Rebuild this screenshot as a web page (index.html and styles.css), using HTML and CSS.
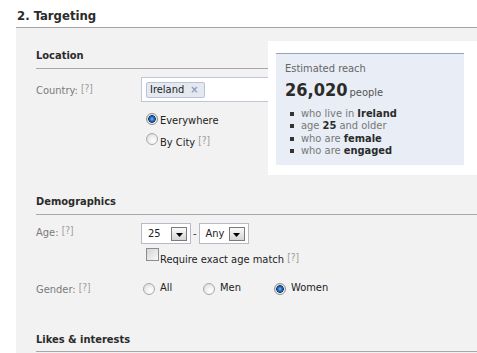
FILE: index.html
```html
<!DOCTYPE html>
<html>
<head>
<meta charset="utf-8">
<title>Targeting</title>
<link rel="stylesheet" href="styles.css">
</head>
<body>
<div class="page">
  <h2 class="title">2. Targeting</h2>
  <div class="panel">
    <section class="sec sec-loc">
      <h3 class="sec-head">Location</h3>
      <div class="row row-country">
        <div class="label label-country">Country: <span class="help">[?]</span></div>
        <div class="field">
          <div class="tokenbox">
            <span class="token"><span class="token-text">Ireland</span><span class="token-x">×</span></span>
          </div>
          <div class="opts">
            <div class="opt"><span class="radio on"></span><span class="txt">Everywhere</span></div>
            <div class="opt"><span class="radio"></span><span class="txt">By City <span class="help">[?]</span></span></div>
          </div>
        </div>
      </div>
    </section>

    <section class="sec sec-demo">
      <h3 class="sec-head">Demographics</h3>
      <div class="row row-age">
        <div class="label label-age">Age: <span class="help">[?]</span></div>
        <div class="field">
          <div class="age-ctrl">
            <div class="select"><span class="sel-text">25</span><span class="arrow"><svg width="7" height="4" viewBox="0 0 7 4"><path d="M0 0H7L3.5 4Z" fill="#000"/></svg></span></div>
            <span class="dash">-</span>
            <div class="select"><span class="sel-text">Any</span><span class="arrow"><svg width="7" height="4" viewBox="0 0 7 4"><path d="M0 0H7L3.5 4Z" fill="#000"/></svg></span></div>
          </div>
          <div class="check-row"><span class="checkbox"></span><span class="txt">Require exact age match <span class="help">[?]</span></span></div>
        </div>
      </div>
      <div class="row row-gender">
        <div class="label">Gender: <span class="help">[?]</span></div>
        <div class="gender-opts">
          <div class="g-opt"><span class="radio"></span><span class="txt">All</span></div>
          <div class="g-opt"><span class="radio"></span><span class="txt">Men</span></div>
          <div class="g-opt"><span class="radio on"></span><span class="txt">Women</span></div>
        </div>
      </div>
    </section>

    <section class="sec sec-likes">
      <h3 class="sec-head">Likes &amp; interests</h3>
    </section>

    <aside class="reach-wrap">
      <div class="reach">
        <div class="reach-title">Estimated reach</div>
        <div class="reach-num"><span class="big">26,020</span><span class="people">people</span></div>
        <ul class="reach-list">
          <li>who live in <b>Ireland</b></li>
          <li>age <b>25</b> and older</li>
          <li>who are <b>female</b></li>
          <li>who are <b>engaged</b></li>
        </ul>
      </div>
    </aside>
  </div>
</div>
</body>
</html>
```

FILE: styles.css
```css
html, body {
  margin: 0;
  padding: 0;
  background: #fff;
  overflow: hidden;
}
body {
  font-family: "DejaVu Sans Condensed", "DejaVu Sans", sans-serif;
  font-stretch: condensed;
  font-size: 11px;
  line-height: 14px;
  color: #333;
}
.page {
  padding-left: 16px;
}
.title {
  margin: 0 0 3px 1px;
  padding-top: 8px;
  font-size: 13px;
  line-height: 16px;
  font-weight: bold;
  color: #2b2b2b;
}
.panel {
  position: relative;
  background: #f2f2f2;
  border-top: 1px solid #a3a3a3;
  padding: 21px 0 3px 20px;
}
.sec + .sec {
  margin-top: 36px;
}
.sec-head {
  margin: 0;
  font-size: 11px;
  line-height: 14px;
  font-weight: bold;
  padding-bottom: 5px;
  border-bottom: 1px solid #a8a8a8;
  color: #2b2b2b;
}
.sec-likes .sec-head {
  padding-bottom: 4px;
}
.row {
  display: grid;
  grid-template-columns: 105px 1fr;
}
.label {
  color: #7a7a7a;
}
.help {
  font-size: 10px;
  color: #9a9a9a;
  vertical-align: 2px;
}
.row-country {
  margin-top: 8px;
}
.label-country {
  padding-top: 5px;
}
.tokenbox {
  width: 240px;
  height: 25px;
  box-sizing: border-box;
  border: 1px solid #bdc7d8;
  background: #fff;
  padding: 4px;
}
.token {
  display: inline-flex;
  align-items: center;
  gap: 6px;
  height: 16px;
  box-sizing: border-box;
  border: 1px solid #b9c3d8;
  border-radius: 2px;
  background: #e4e8f1;
  padding: 0 5px 0 3px;
  color: #222;
}
.token-x {
  color: #8e9bb2;
  font-weight: bold;
  font-size: 11px;
}
.opts {
  margin-top: 9px;
  margin-bottom: 8px;
}
.opt {
  display: flex;
  align-items: flex-start;
  height: 20px;
  line-height: 20px;
  color: #222;
}
.opt .radio {
  margin: 2px 2px 0 5px;
}
.radio {
  flex-shrink: 0;
  width: 12px;
  height: 12px;
  box-sizing: border-box;
  border-radius: 50%;
  border: 1px solid #a9a9a9;
  background: radial-gradient(circle at 65% 70%, #ffffff 0, #f3f3f3 35%, #d6d6d6 100%);
}
.radio.on {
  border-color: #8d8d8d;
  background:
    radial-gradient(circle at 50% 50%, #7fc0f0 0, #2f7fd0 1.6px, #1b5aa5 2.8px, #0f2f5c 3.5px, rgba(15,47,92,0) 4.1px),
    radial-gradient(circle at 65% 70%, #ffffff 0, #f3f3f3 35%, #d6d6d6 100%);
}
.row-age {
  margin-top: 8px;
}
.label-age {
  padding-top: 1px;
}
.age-ctrl {
  display: flex;
  align-items: center;
}
.select {
  width: 50px;
  height: 21px;
  box-sizing: border-box;
  border: 1px solid #b5bcc7;
  background: #fff;
  display: flex;
  align-items: center;
  justify-content: space-between;
  padding: 0 3px 0 6px;
  color: #222;
}
.arrow {
  width: 16px;
  height: 14px;
  box-sizing: border-box;
  border: 1px solid #7a7a7a;
  background: linear-gradient(#fafafa, #d4d4d4);
  display: flex;
  align-items: center;
  justify-content: center;
  padding-top: 2px;
}
.arrow svg {
  display: block;
}
.dash {
  margin: 0 2px;
}
.check-row {
  display: flex;
  align-items: flex-start;
  margin-top: 4px;
  margin-left: 5px;
  color: #222;
}
.checkbox {
  flex-shrink: 0;
  width: 13px;
  height: 13px;
  box-sizing: border-box;
  border: 1px solid #8c8c8c;
  background: linear-gradient(135deg, #d4d4d4, #f8f8f8);
  margin-right: 1px;
}
.check-row .txt {
  margin-top: 3px;
}
.row-gender {
  margin-top: 14px;
}
.gender-opts {
  display: grid;
  grid-template-columns: 60px 71px auto;
  color: #222;
}
.g-opt {
  display: flex;
  align-items: flex-start;
}
.g-opt .radio {
  margin: 2px 5px 0 2px;
}
.reach-wrap {
  position: absolute;
  left: 252px;
  top: 13px;
  right: 0;
  height: 134px;
  box-sizing: border-box;
  background: #fff;
  padding: 12px 13px 0 8px;
}
.reach {
  width: 188px;
  height: 112px;
  box-sizing: border-box;
  background: #e9edf5;
  border-top: 1px solid #97a3b8;
  padding: 8px 9px 0;
}
.reach-title {
  color: #666;
}
.reach-num {
  margin-top: 3px;
  line-height: 22px;
}
.big {
  font-size: 18px;
  font-weight: bold;
  color: #2b2b2b;
}
.people {
  margin-left: 2px;
  color: #555;
}
.reach-list {
  margin: 4px 0 0;
  padding: 0;
  list-style: none;
  line-height: 12.3px;
  color: #777;
}
.reach-list li::before {
  content: "";
  display: inline-block;
  width: 4px;
  height: 4px;
  background: #333;
  margin: 0 7px 0 5px;
  vertical-align: 1px;
}
.reach-list b {
  color: #2b2b2b;
}
```
